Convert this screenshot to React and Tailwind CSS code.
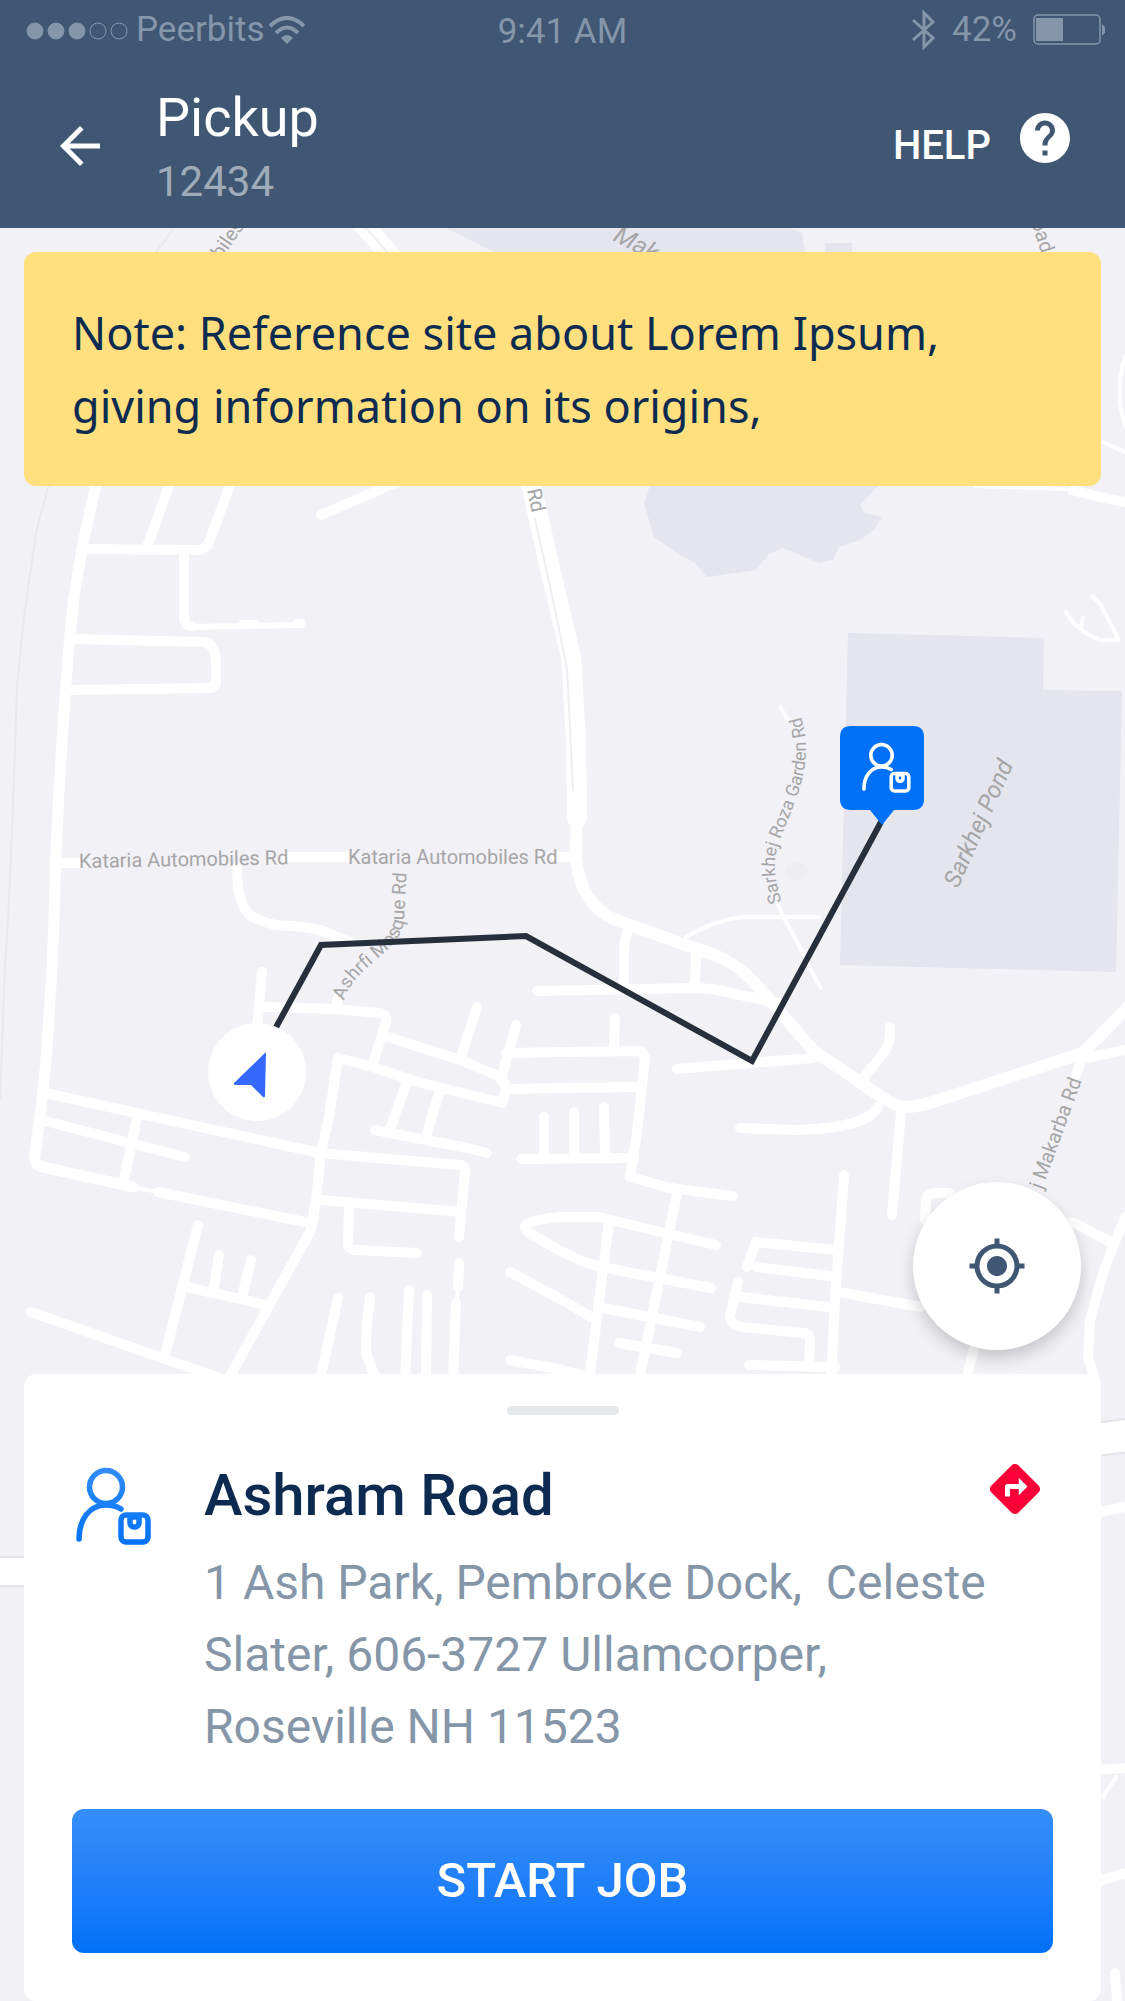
import React from 'react';
import { MdArrowBack, MdHelp, MdDirections, MdMyLocation } from 'react-icons/md';

const minorRoads = [
  'M171 480 L147 547',
  'M232 480 L208 545 L201 550 L83 549',
  'M72 639 L204 642 Q214 643 216 660 L216 683 Q216 688 211 688 L68 690',
  'M321 515 L402 480',
  'M61 863 L78 863 M287 857 L348 857 M556 857 L576 857',
  'M237 868 Q237 905 251 916 Q262 922 276 925 Q302 926 320 930 L352 943',
  'M262 972 L257 1030',
  'M262 1007 L336 1009 L379 1013 Q388 1014 386 1022 L373 1063',
  'M337 1000 L337 1009',
  'M388 1037 L460 1060 L501 1077 L506 1087 L503 1103 L417 1082 L373 1067 L338 1058 L329 1117 L321 1153 L316 1200 L311 1230 L276 1293 L228 1380',
  'M477 1007 L461 1057',
  'M516 1025 L501 1080',
  'M506 1053 L562 1052 L641 1051 L645 1057 L637 1133 L630 1177 L670 1188 L733 1196',
  'M506 1089 L562 1088 L641 1087',
  'M408 1078 L390 1130 M440 1090 L427 1133',
  'M375 1130 L467 1148 L487 1153',
  'M45 1093 L320 1153 L460 1165 Q466 1166 465 1172 L459 1237',
  'M41 1120 L185 1157',
  'M138 1113 L124 1180',
  'M158 1192 L305 1222',
  'M321 1200 L460 1212',
  'M349 1207 L348 1243 Q348 1250 356 1250 L417 1253',
  'M198 1225 L165 1355',
  'M187 1287 L266 1305 M219 1255 L214 1288 M251 1260 L242 1297',
  'M31 1312 L225 1380',
  'M338 1298 L320 1380 M370 1297 Q364 1345 367 1355 L376 1380',
  'M409 1290 L405 1380 M427 1295 L426 1380',
  'M459 1263 L458 1287 M456 1303 L453 1380',
  'M544 1117 L544 1158 M521 1159 L634 1158 M574 1112 L574 1158 M604 1107 L605 1158 M615 1018 L614 1047',
  'M537 991 L695 988 L713 989 L777 1003',
  'M627 933 Q624 942 624 952 L624 987 M696 950 L695 987',
  'M677 1069 L813 1058',
  'M890 1027 Q892 1042 882 1055 L864 1077',
  'M740 1128 L795 1130 Q840 1129 862 1120 Q874 1114 878 1107',
  'M901 1113 L892 1215',
  'M844 1175 L835 1300 L831 1380',
  'M716 1245 L598 1217 L560 1217 Q528 1220 525 1226 Q524 1232 540 1239 Q575 1261 601 1267 L711 1288',
  'M677 1193 L639 1380 M609 1223 L589 1380',
  'M510 1272 L562 1300 L591 1317',
  'M598 1307 L700 1327 M619 1343 L677 1353',
  'M510 1360 L562 1370 L600 1380',
  'M747 1267 L756 1242 L835 1250 M756 1267 L831 1276',
  'M738 1282 L730 1316 Q730 1324 741 1327 L804 1333 Q811 1334 810 1342 L809 1367',
  'M741 1297 L828 1307 M749 1365 L835 1367',
  'M838 1292 L921 1307',
  'M925 1220 L926 1200 Q927 1193 936 1193 L950 1193',
  'M1072 1222 L1111 1242 M1125 1217 L1104 1270 L1090 1320 L1088 1357 L1095 1380',
  'M975 1345 L966 1380',
  'M1086 1058 L1125 1050 M1083 1055 L1076 1075',
  'M1072 490 Q1100 498 1130 503',
  'M1095 1770 L1130 1768 M1095 1882 L1130 1872 M1115 1973 L1117 2001',
  'M1095 1513 L1130 1506',
];

const lanes = [
  'M975 486 L1065 489',
  'M780 707 L788 720',
  'M777 903 L785 920 L803 953 Q812 974 821 988',
  'M686 937 Q715 920 741 917 L819 917',
  'M1092 596 L1101 605 L1119 640 L1100 640 Q1075 630 1066 612 M1081 627 L1083 618',
  'M133 1187 L158 1192',
  'M458 1287 L456 1303',
  'M1116 1777 L1103 1797',
  'M1130 345 Q1112 385 1125 425 M1098 440 L1130 454',
];

function PersonBox({ stroke }) {
  return (
    <g fill="none" stroke={stroke} strokeWidth="5.5" strokeLinecap="round" strokeLinejoin="round">
      <circle cx="30" cy="22" r="16.5" />
      <path d="M3 74 C3 55 13 40 30 40 Q39 40 45 44" />
      <rect x="45" y="50" width="27" height="27" rx="5" />
      <path d="M54 52 H63 V58 a4 4 0 0 1 -4 4 h-1 a4 4 0 0 1 -4 -4 Z" />
    </g>
  );
}

function MapView() {
  return (
    <svg
      className="absolute inset-0 h-full w-full font-[Roboto,sans-serif]"
      viewBox="0 228 1125 1773"
      preserveAspectRatio="xMidYMin slice"
      role="img"
      aria-label="Route map"
    >
      <rect x="0" y="228" width="1125" height="1773" fill="#f2f1f6" />

      {/* ponds */}
      <g fill="#e4e5ed">
        <path d="M447 228 L790 228 L802 233 L806 260 L510 260 Z" />
        <path d="M825 243 h27 v17 h-27 Z" />
        <path d="M652 480 L644 503 L654 537 L677 553 L695 563 L707 577 L756 570 L768 555 L783 548 L819 563 L833 560 L839 547 L860 540 L874 530 L882 517 L865 513 L860 505 L884 480 Z" />
        <path d="M848 633 L1044 638 L1043 690 L1122 691 L1116 972 L840 965 Z" />
      </g>
      <ellipse cx="797" cy="871" rx="12" ry="9" fill="#eeeef1" />

      {/* railway */}
      <g fill="none" stroke="#e8e8ed" strokeWidth="2">
        <path d="M174 228 L156 252 M50 480 L36 533 L24 617 L17 687 L13 808 L8 920 L5 967 L0 1100" />
      </g>

      {/* roads */}
      <g fill="none" stroke="#fff" strokeLinecap="round" strokeLinejoin="round">
        <path d="M97 480 L83 543 L74 597 L68 657 L64 710 L59 790 L56 853 L54 920 L52 967 L47 1050 L42 1100 L35 1155 Q33 1165 43 1167 L133 1187" strokeWidth="11" />
        {minorRoads.map((d) => (
          <path key={d} d={d} strokeWidth="10" />
        ))}
        {lanes.map((d) => (
          <path key={d} d={d} strokeWidth="4" />
        ))}
        <path d="M184 550 L184 618 Q184 626 192 626" strokeWidth="10" />
        <path d="M190 627 L302 625 M242 623 L256 623 M297 622 L302 622" strokeWidth="6" />
        <path d="M355 215 L390 255 L530 480 L548 560 L571 657 L576 740 L577 818" strokeWidth="20" />
        <path d="M577 810 L576 857 Q580 905 616 920 L680 943 L715 955 Q735 963 752 980 L813 1050 L867 1087 Q888 1103 903 1107 Q920 1107 939 1100 L1083 1053 L1130 1005" strokeWidth="12" />
        <path d="M366 228 L387 252 M535 519 L553 600 L567 668 L573 790" stroke="#efeff3" strokeWidth="2" />
      </g>
      <g stroke="#e4e4e8" strokeWidth="2">
        <path d="M-9 1557 H30 V1586 H-9 Z M1095 1423 L1140 1417 V1451 L1095 1456 Z" fill="#fff" />
      </g>

      {/* street names */}
      <g fill="#a6a6a6" fontSize="20">
        <text x="79" y="868" transform="rotate(-1 79 868)">Kataria Automobiles Rd</text>
        <text x="348" y="864">Kataria Automobiles Rd</text>
        <path id="ashrfi" d="M344 1001 C354 964 402 954 404 919 L408 850" fill="none" />
        <text fontSize="19">
          <textPath href="#ashrfi">Ashrfi Mosque Rd</textPath>
        </text>
        <path id="roza" d="M782 902 C770 868 775 850 784 830 C798 795 806 775 806 750 C806 733 803 722 796 700" fill="none" />
        <text fontSize="18">
          <textPath href="#roza">Sarkhej Roza Garden Rd</textPath>
        </text>
        <text x="958" y="889" fontSize="24" fontStyle="italic" transform="rotate(-66 958 889)">Sarkhej Pond</text>
        <text x="1042" y="1190" transform="rotate(-70 1042 1190)">j Makarba Rd</text>
        <text x="221" y="260" transform="rotate(-55 221 260)">biles</text>
        <text x="612" y="240" fontSize="25" fontStyle="italic" transform="rotate(28 612 240)">Maka</text>
        <text x="1031" y="222" transform="rotate(72 1031 222)">oad</text>
        <text x="527" y="490" transform="rotate(78 527 490)">Rd</text>
      </g>

      {/* route */}
      <path d="M274 1031 L321 945 L526 936 L752 1061 L881 822" fill="none" stroke="#262f3b" strokeWidth="6" />
      <circle cx="257" cy="1072" r="49" fill="#fff" />
      <path d="M266 1052 L234 1083 Q233 1085 236 1085 L251 1085 L263 1097 Q265 1098 265 1096 Z" fill="#3568fb" />

      {/* drop point */}
      <path d="M851 726 H913 Q924 726 924 737 V799 Q924 810 913 810 H894 L882 825 L870 810 H851 Q840 810 840 799 V737 Q840 726 851 726 Z" fill="#0071f8" />
      <g transform="translate(862 741) scale(0.65)">
        <PersonBox stroke="#fff" />
      </g>
    </svg>
  );
}

function StatusBar() {
  return (
    <div className="grid h-15 grid-cols-3 items-center px-5 text-[35px] leading-10 text-[#8496aa]">
      <div className="flex items-center gap-2">
        <svg className="h-5 w-27 shrink-0" viewBox="0 0 108 20" fill="currentColor" stroke="currentColor">
          <circle cx="15" cy="11" r="8" />
          <circle cx="36" cy="11" r="8" />
          <circle cx="57" cy="11" r="8" />
          <circle cx="78" cy="11" r="8" fill="none" />
          <circle cx="99" cy="11" r="8" fill="none" />
        </svg>
        <span>Peerbits</span>
        <svg className="-ml-1 h-7 w-9" viewBox="0 0 36 28">
          <g fill="none" stroke="currentColor" strokeWidth="4">
            <path d="M1 10 Q18 -6 35 10" />
            <path d="M7 17 Q18 6 29 17" />
          </g>
          <path d="M12 22 Q18 16 24 22 L18 28 Z" fill="currentColor" />
        </svg>
      </div>
      <span className="pt-1 text-center">9:41 AM</span>
      <div className="flex items-center justify-end gap-4">
        <svg className="h-10 w-6" viewBox="0 0 24 40" fill="none" stroke="currentColor" strokeWidth="3">
          <path d="M1 10 L21 28 L12 37 V3 L21 12 L1 30" />
        </svg>
        <span>42%</span>
        <svg className="h-8 w-18" viewBox="0 0 72 32">
          <rect x="1" y="1" width="66" height="29" rx="4" fill="none" stroke="currentColor" strokeWidth="1.5" />
          <rect x="3" y="4" width="27" height="23" fill="currentColor" />
          <path d="M69 10 Q76 16 69 22 Z" fill="currentColor" />
        </svg>
      </div>
    </div>
  );
}

export default function App() {
  return (
    <div className="flex min-h-screen flex-col bg-[#f2f1f6] font-[Roboto,sans-serif]">
      <header className="bg-[#3f5773]">
        <StatusBar />
        <div className="flex h-42 items-start justify-between px-12.5 pt-7">
          <div className="flex gap-11.5">
            <button type="button" aria-label="Back" className="mt-7 h-15 text-white">
              <MdArrowBack className="size-15" />
            </button>
            <div>
              <h1 className="text-[54px] leading-15 text-white">Pickup</h1>
              <p className="mt-1 text-[42px] leading-15 text-[#9fabb9]">12434</p>
            </div>
          </div>
          <button type="button" className="mt-5 flex items-start gap-6 text-[40px] leading-15 font-medium text-white">
            <span className="pt-2">HELP</span>
            <MdHelp className="size-15" />
          </button>
        </div>
      </header>

      <main className="relative flex flex-1 flex-col justify-between px-6 pt-6">
        <MapView />

        <p className="relative rounded-xl bg-[#ffdf7e] px-12 py-11 font-['Noto_Sans',sans-serif] text-[45px] leading-[73px] whitespace-pre-line text-[#0d2b50]">
          Note: Reference site about Lorem Ipsum,{'\n'}giving information on its origins,
        </p>

        <div className="relative flex flex-col">
          <button
            type="button"
            aria-label="My location"
            className="mr-5 mb-6 flex size-42 items-center justify-center self-end rounded-full bg-white text-[#3f5773] shadow-[0_8px_16px_rgba(0,0,0,0.18)]"
          >
            <MdMyLocation className="size-15" />
          </button>

          <section className="rounded-xl bg-white px-12 pt-8 pb-12">
            <div className="mx-auto h-[9px] w-28 rounded-full bg-[#e5e9ec]" />
            <div className="mt-11 flex items-start">
              <svg className="mt-1.5 w-20 shrink-0" viewBox="-4 0 80 80">
                <defs>
                  <linearGradient id="blue" gradientUnits="userSpaceOnUse" x1="0" y1="0" x2="0" y2="80">
                    <stop offset="0" stopColor="#358ef9" />
                    <stop offset="1" stopColor="#0071f8" />
                  </linearGradient>
                </defs>
                <PersonBox stroke="url(#blue)" />
              </svg>
              <div className="ml-13 flex-1">
                <h2 className="text-[58px] leading-18 font-medium text-[#0d2b50]">Ashram Road</h2>
                <p className="mt-4 text-[48px] leading-18 whitespace-pre-line text-[#8496a8]">
                  1 Ash Park, Pembroke Dock,&nbsp; Celeste Slater, 606-3727 Ullamcorper,{'\n'}Roseville NH 11523
                </p>
              </div>
              <button type="button" aria-label="Directions" className="-ml-18 mr-2 text-[#fb0038]">
                <MdDirections className="size-15" />
              </button>
            </div>
            <button
              type="button"
              className="mt-11.5 h-36 w-full rounded-xl bg-linear-to-b from-[#358ef9] to-[#0071f8] text-[49px] font-medium text-white"
            >
              START JOB
            </button>
          </section>
        </div>
      </main>
    </div>
  );
}
